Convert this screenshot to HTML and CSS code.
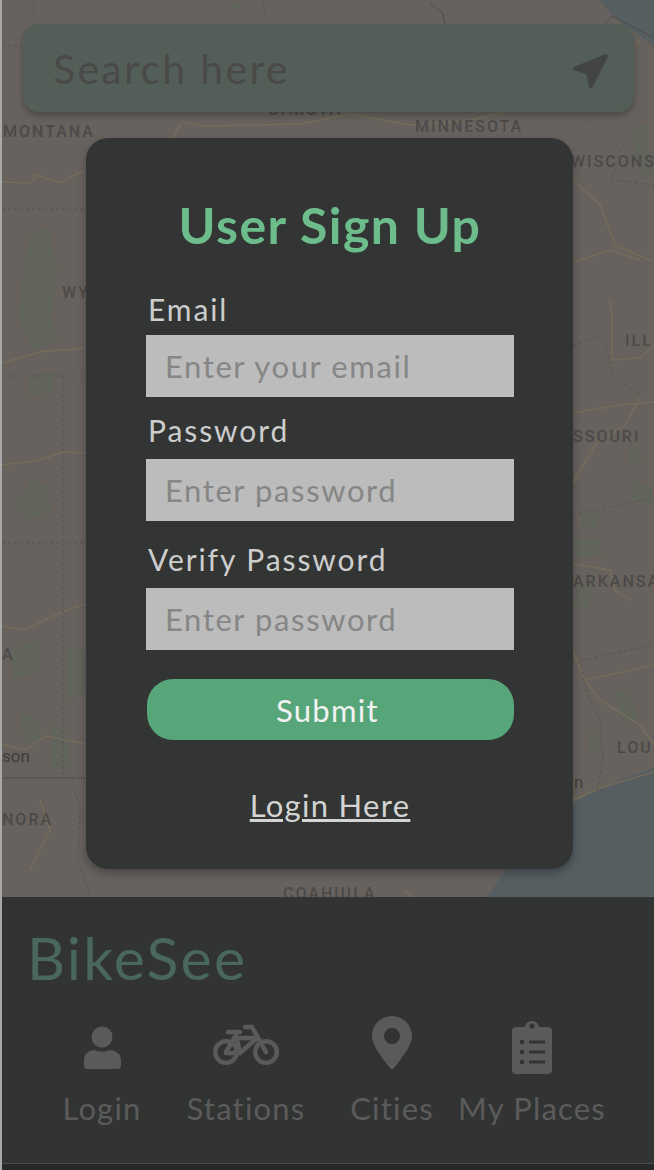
FILE: index.html
```html
<!DOCTYPE html>
<html>
	<head>
		<title>BikeSee</title>
		<meta charset="utf-8"/>
		<link rel="stylesheet" href="styles.css">
	</head>
	<body>
		<div class="page">
			<div class="map">
				<svg class="mapart" viewBox="2 0 652 897">
					<!-- water -->
					<path class="water" d="M487 897L520 850L574 802L600 788L625 778L654 768V897Z"/>
					<path class="water" d="M600 0H654V46L612 16Z"/>
					<!-- parks -->
					<g class="park">
						<path d="M30 235L48 228L58 270L50 320L60 340L35 350L18 320L24 270Z"/>
						<path d="M30 375L55 372L52 392L28 396Z"/>
						<path d="M32 480L45 485L52 510L30 520L14 505Z"/>
						<path d="M10 650L38 640L40 670L14 680Z"/>
						<path d="M66 646L85 650L85 690L68 700Z"/>
						<path d="M20 710L38 720L42 740L24 745Z"/>
						<path d="M50 725L70 735L70 765L52 770Z"/>
						<path d="M580 510L600 515L596 530L582 528Z"/>
						<path d="M630 440L640 450L642 462L630 465Z"/>
						<path d="M632 480L652 490L650 505L634 500Z"/>
						<path d="M575 540L596 538L604 555L576 558Z"/>
						<path d="M578 580L595 590L585 610L575 605Z"/>
						<path d="M615 690L630 695L638 720L622 722Z"/>
						<path d="M590 730L602 740L598 755L588 750Z"/>
						<path d="M632 130L646 122L650 175L640 180Z"/>
						<path d="M392 152L400 155L398 164L390 162Z"/>
						<path d="M232 3L240 3L244 8L232 8Z"/>
					</g>
					<!-- state borders -->
					<g class="road">
						<path d="M2 182L30 183L36 175L60 183L84 170"/>
						<path d="M165 150L182 122L205 126L300 124L350 114L410 125L470 120L560 100L640 40"/>
						<path d="M2 363L40 352L85 348"/>
						<path d="M2 465L40 460L62 452L85 453"/>
						<path d="M2 626L25 630L62 612L85 604"/>
						<path d="M2 744L25 750L45 736L85 744"/>
						<path d="M573 413L620 405L654 402"/>
						<path d="M573 180L600 205L615 245L654 262"/>
						<path d="M574 262L610 250L640 260"/>
						<path d="M610 300L612 318L612 360L640 358L654 345"/>
						<path d="M573 483L595 445L625 425L640 398"/>
						<path d="M573 564L610 570L615 590L630 600"/>
						<path d="M573 600L560 620L585 680L654 665"/>
						<path d="M585 680L600 700L640 725L654 745"/>
						<path d="M573 800L600 788L654 772"/>
						<path d="M40 800L50 830L30 870"/>
						<path d="M405 890L412 897"/>
					</g>
					<g class="border">
						<path d="M2 46H22"/>
						<path d="M2 209H85"/>
						<path d="M2 376H85"/>
						<path d="M2 543H85"/>
						<path d="M63 376V777"/>
						<path d="M573 345L600 337L606 345L612 375L640 395"/>
						<path d="M573 515L654 498"/>
						<path d="M583 660L654 645"/>
						<path d="M580 660L586 690L600 720L603 760L597 790"/>
						<path d="M72 780L80 810L78 860L90 897"/>
						<path d="M262 0L268 25M34 0V24"/>
						<path d="M590 120L620 150L612 180L654 185"/>
					</g>
					<path class="line" d="M2 778H85"/>
					<path class="line" d="M430 4L442 12L446 28L380 30"/>
					<path class="line" d="M600 30L612 16L654 38"/>
					<!-- labels -->
					<g class="maplabel">
						<text x="3" y="137">MONTANA</text>
						<text x="415" y="132">MINNESOTA</text>
						<text x="571" y="167">WISCONS</text>
						<text x="269" y="115">DAKOTA</text>
						<text x="62" y="298">WY</text>
						<text x="625" y="346">ILL</text>
						<text x="573" y="442">SSOURI</text>
						<text x="573" y="587">ARKANSA</text>
						<text x="2" y="660">A</text>
						<text x="617" y="753">LOU</text>
						<text x="2" y="825">NORA</text>
						<text x="283" y="899">COAHUILA</text>
					</g>
					<g class="cityname">
						<text x="2" y="762">son</text>
						<text x="574" y="788">n</text>
					</g>
				</svg>

				<div class="search">
					<span class="searchtext">Search here</span>
					<svg class="locate" viewBox="0 0 38 36">
						<path d="M35 3L4 15.500L17 19.500L20 33Z"/>
					</svg>
				</div>

				<div class="modal">
					<h1 class="title">User Sign Up</h1>
					<form class="signup">
						<label class="fieldlabel">Email</label>
						<input class="field" type="text" placeholder="Enter your email">
						<label class="fieldlabel second">Password</label>
						<input class="field" type="password" placeholder="Enter password">
						<label class="fieldlabel third">Verify Password</label>
						<input class="field" type="password" placeholder="Enter password">
						<button class="submit" type="button">Submit</button>
					</form>
					<a class="loginlink" href="#">Login Here</a>
				</div>
			</div>

			<div class="nav">
				<div class="brand">BikeSee</div>
				<div class="tabs">
					<div class="tab">
						<svg class="tabicon" width="40" height="60" viewBox="0 0 40 60">
							<circle cx="20" cy="22" r="10.500"/>
							<path d="M2 50V45C2 38 8 35 13 35C16 37 24 37 27 35C32 35 39 38 39 45V50C39 52 38 54 36 54H5C3 54 2 52 2 50Z"/>
						</svg>
						<span class="tablabel">Login</span>
					</div>
					<div class="tab">
						<svg class="tabicon" width="68" height="60" viewBox="0 0 68 60">
							<g class="bikelines">
								<circle cx="14" cy="37" r="10.800"/>
								<circle cx="54" cy="37" r="10.800"/>
								<path d="M14 37L24 20L28 38H14"/>
								<path d="M24 23H45L28 38"/>
								<path d="M16 17H28"/>
								<path d="M33 12H40L54 37"/>
							</g>
						</svg>
						<span class="tablabel">Stations</span>
					</div>
					<div class="tab">
						<svg class="tabicon" width="42" height="60" viewBox="0 0 42 60">
							<path fill-rule="evenodd" d="M21 1C32 1 41 10 41 21C41 30 31 43 23 53C22 54.500 20 54.500 19 53C11 43 1 30 1 21C1 10 10 1 21 1ZM21 13A8 8 0 1 0 21 29A8 8 0 1 0 21 13Z"/>
						</svg>
						<span class="tablabel">Cities</span>
					</div>
					<div class="tab">
						<svg class="tabicon" width="42" height="60" viewBox="0 0 42 60">
							<path fill-rule="evenodd" d="M5 12H14C14.500 8.500 17 6 21 6C25 6 27.500 8.500 28 12H37C39.500 12 41 13.500 41 16V55C41 57.500 39.500 59 37 59H5C2.500 59 1 57.500 1 55V16C1 13.500 2.500 12 5 12ZM21 8.500A2.500 2.500 0 1 0 21 13.500A2.500 2.500 0 1 0 21 8.500Z"/>
							<g class="listmarks">
								<circle cx="11" cy="27" r="2.300"/>
								<circle cx="11" cy="37" r="2.300"/>
								<circle cx="11" cy="47" r="2.300"/>
								<rect x="18" y="25.500" width="16" height="3"/>
								<rect x="18" y="35.500" width="16" height="3"/>
								<rect x="18" y="45.500" width="16" height="3"/>
							</g>
						</svg>
						<span class="tablabel">My Places</span>
					</div>
				</div>
			</div>
			<div class="bottomstrip"></div>
		</div>
	</body>
</html>
```

FILE: styles.css
```css
* {
	box-sizing: border-box;
}

html, body {
	margin: 0;
	padding: 0;
}

body {
	background-color: #26282a;
	font-family: "Lato", "Noto Sans", sans-serif;
}

.page {
	width: 654px;
	height: 1170px;
	display: flex;
	flex-direction: column;
	overflow: hidden;
	border-left: 2px solid #a9a9a9;
}

/* map */
.map {
	position: relative;
	height: 897px;
	background-color: #67625e;
	overflow: hidden;
}

.mapart {
	position: absolute;
	left: 0;
	top: 0;
	width: 652px;
	height: 897px;
}

.water {
	fill: #565e62;
}

.park {
	fill: #60645a;
}

.road {
	fill: none;
	stroke: #766c5a;
	stroke-width: 1.5;
}

.border {
	fill: none;
	stroke: #575452;
	stroke-width: 1;
	stroke-dasharray: 3 3;
}

.line {
	fill: none;
	stroke: #4e4c4b;
	stroke-width: 1;
}

.maplabel text {
	font-family: "Roboto", sans-serif;
	font-size: 16px;
	font-weight: 500;
	letter-spacing: 2px;
	fill: #4c4a48;
}

.cityname text {
	font-family: "Roboto", sans-serif;
	font-size: 17px;
	fill: #403e3d;
}

/* search box */
.search {
	position: absolute;
	left: 21px;
	top: 24px;
	width: 611px;
	height: 88px;
	display: flex;
	align-items: center;
	justify-content: space-between;
	padding: 0 25px 0 30px;
	background-color: #545e58;
	border-radius: 16px;
	box-shadow: 0 4px 6px rgba(0, 0, 0, 0.25);
}

.searchtext {
	font-size: 41px;
	letter-spacing: 2.300px;
	color: #494a48;
}

.locate {
	width: 38px;
	height: 36px;
	margin-top: 5px;
	fill: #434544;
	stroke: #434544;
	stroke-width: 4;
	stroke-linejoin: round;
}

/* sign up dialog */
.modal {
	position: absolute;
	left: 84px;
	top: 138px;
	width: 487px;
	height: 731px;
	padding: 60px 59px 0 60px;
	display: flex;
	flex-direction: column;
	background-color: #333534;
	border-radius: 22px;
	box-shadow: 0 4px 8px rgba(0, 0, 0, 0.3);
}

.title {
	margin: 0;
	height: 56px;
	line-height: 54px;
	text-align: center;
	font-size: 50px;
	font-weight: 700;
	letter-spacing: 1.400px;
	color: #6dbd8c;
}

.signup {
	display: flex;
	flex-direction: column;
	margin-top: 35px;
}

.fieldlabel {
	height: 46px;
	line-height: 40px;
	margin-left: 2px;
	font-size: 30px;
	letter-spacing: 1.900px;
	color: #cdcdcd;
}

.second {
	margin-top: 13px;
	height: 49px;
}

.third {
	margin-top: 18px;
	height: 49px;
}

.field {
	width: 368px;
	height: 62px;
	padding: 0 19px;
	border: none;
	border-radius: 0;
	background-color: #bcbcbc;
	font-family: inherit;
	font-size: 31px;
	letter-spacing: 1.600px;
}

.field::placeholder {
	color: #868686;
	opacity: 1;
}

.submit {
	width: 367px;
	height: 61px;
	margin: 29px 0 0 1px;
	padding: 0 6px 0 0;
	border: none;
	border-radius: 26px;
	background-color: #57a679;
	font-family: inherit;
	font-size: 31px;
	letter-spacing: 1.300px;
	color: #f2f2f2;
}

.loginlink {
	margin-top: 46px;
	text-align: center;
	font-size: 31px;
	letter-spacing: 1.300px;
	color: #d4d4d4;
}

/* bottom bar */
.nav {
	height: 266px;
	padding: 30px 0 0 25px;
	background-color: #323433;
}

.brand {
	height: 66px;
	line-height: 62px;
	font-size: 59px;
	letter-spacing: 2.300px;
	color: #49675a;
}

.tabs {
	display: grid;
	grid-template-columns: 150px 138px 154px 126px;
	margin-top: 22px;
}

.tab {
	display: flex;
	flex-direction: column;
	align-items: center;
}

.tabicon {
	display: block;
	fill: #5b595a;
}

.bikelines {
	fill: none;
	stroke: #5b595a;
	stroke-width: 4.500;
	stroke-linecap: round;
	stroke-linejoin: round;
}

.listmarks {
	fill: #323433;
}

.tablabel {
	margin-top: 14px;
	white-space: nowrap;
	font-size: 31px;
	letter-spacing: 1.200px;
	color: #5b5b5b;
}

.bottomstrip {
	flex: 1;
	background-color: #26282a;
	border-top: 1px solid #4a4c4d;
}
```
